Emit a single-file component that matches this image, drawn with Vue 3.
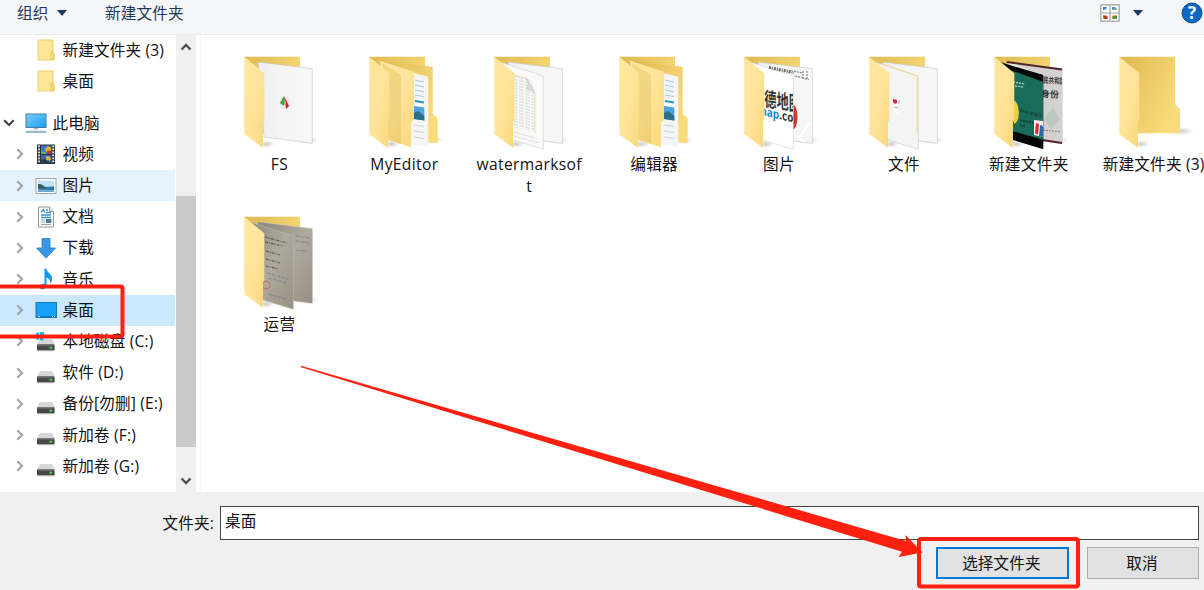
<script setup>
const favourites = ['新建文件夹 (3)', '桌面']

const nodes = [
  { label: '视频', icon: 'video' },
  { label: '图片', icon: 'picture', hover: true },
  { label: '文档', icon: 'document' },
  { label: '下载', icon: 'download' },
  { label: '音乐', icon: 'music' },
  { label: '桌面', icon: 'desktop', selected: true },
  { label: '本地磁盘 (C:)', icon: 'disk', system: true },
  { label: '软件 (D:)', icon: 'disk' },
  { label: '备份[勿删] (E:)', icon: 'disk' },
  { label: '新加卷 (F:)', icon: 'disk' },
  { label: '新加卷 (G:)', icon: 'disk' },
]

const folders = [
  { label: 'FS', kind: 'fs' },
  { label: 'MyEditor', kind: 'nested' },
  { label: 'watermarksoft', kind: 'watermark' },
  { label: '编辑器', kind: 'nested' },
  { label: '图片', kind: 'pictures' },
  { label: '文件', kind: 'files' },
  { label: '新建文件夹', kind: 'cards' },
  { label: '新建文件夹 (3)', kind: 'empty', nowrap: true },
  { label: '运营', kind: 'scans' },
]
</script>

<template>
  <div class="dialog">
    <header class="toolbar">
      <span class="tool organize">组织<i class="caret"></i></span>
      <span class="tool">新建文件夹</span>
      <span class="spacer"></span>
      <svg class="view-icon" viewBox="0 0 20 18">
        <rect x=".8" y=".8" width="18.4" height="16.4" fill="#fff" stroke="#a5a5a5" stroke-width="1.3" />
        <path d="M10 1v16M1 9h18" stroke="#a5a5a5" stroke-width="1.2" />
        <path d="M3 3h4l-2 3H3z" fill="#3d83d2" /><path d="M5 5l2-1v2H4z" fill="#a9c9ea" />
        <path d="M12 3h3l2 2-2 1h-3z" fill="#4c9bcf" /><path d="M14 4h3v1l-2 1z" fill="#8cab55" />
        <path d="M3 11.500h4.500V15H3z" fill="#e0782c" /><path d="M3 11.500h2l2.500 2V15H5z" fill="#b12d20" />
        <path d="M12 11.500h5V15h-5z" fill="#d1a42b" /><path d="M12 13l3-1.500 2 .5v3h-3z" fill="#548c4b" />
      </svg>
      <i class="caret view-caret"></i>
      <svg class="help-icon" viewBox="0 0 22 22">
        <circle cx="11" cy="11" r="10" fill="#0868c6" stroke="#174e84" />
        <text x="11" y="17.2" text-anchor="middle" fill="#fff" font-size="17" font-weight="700">?</text>
      </svg>
    </header>

    <main class="content">
      <aside class="tree">
        <div v-for="name in favourites" :key="name" class="row favourite">
          <svg class="small-folder" viewBox="0 0 18 22">
            <path d="M1 1h15v13l1 1v6H1z" fill="#ffe596" stroke="#efd070" />
            <path d="M14 20.5v-7l2-1.5v2l1 1v5.5z" fill="#f8d775" stroke="#e7c35a" stroke-width=".8" />
          </svg>
          <span>{{ name }}</span>
        </div>
        <div class="row computer">
          <svg class="chevron open" viewBox="0 0 12 12"><path d="M1.2 3.3L6 8l4.8-4.7" /></svg>
          <svg class="pc-icon" viewBox="0 0 22 22">
            <defs>
              <linearGradient id="screen" x2="1" y2="1">
                <stop stop-color="#7acbfa" /><stop offset="1" stop-color="#1ba0f3" />
              </linearGradient>
            </defs>
            <rect x="1" y="2" width="20" height="13.5" fill="url(#screen)" stroke="#477d9e" />
            <path d="M9 16h4v1.5H8z" fill="#a9bac5" />
            <rect x=".6" y="18.8" width="21" height="2.2" rx="1" fill="#9fb6c6" />
          </svg>
          <span>此电脑</span>
        </div>
        <div
          v-for="node in nodes"
          :key="node.label"
          class="row node"
          :class="{ hover: node.hover, selected: node.selected }"
        >
          <svg class="chevron" viewBox="0 0 12 12"><path d="M3.3 1.2L8 6l-4.7 4.8" /></svg>
          <svg class="node-icon" viewBox="0 0 22 22">
            <g v-if="node.icon === 'video'">
              <rect x="2" y="1.5" width="18" height="19.5" fill="#313131" />
              <rect x="6" y="2.5" width="10.5" height="8.5" fill="#3b72d3" />
              <rect x="6" y="12" width="10.5" height="8" fill="#3565ba" />
              <path d="M10 6l3-3 3 2v4h-5z" fill="#e7b626" /><path d="M12 7.500h4V11h-4z" fill="#bd3a33" />
              <path d="M6 8l4 1 2 2H6z" fill="#65b454" /><path d="M11 13l4 .5 1 3.500-5 1z" fill="#d9b23f" />
              <path d="M6 17l4-1 6 4H6z" fill="#273e4b" />
              <path d="M4 2.5v18M18.2 2.5v18" stroke="#f2f2f2" stroke-width="1.8" stroke-dasharray="1.8 1.2" />
            </g>
            <g v-else-if="node.icon === 'picture'">
              <rect x="1" y="3.5" width="20" height="15" fill="#fff" stroke="#a0a4a8" />
              <rect x="3" y="5.5" width="16" height="11" fill="#c2e1f6" />
              <path d="M3 9l4 .5 4 2.500 8-1v5.500H3z" fill="#5c9cba" />
              <path d="M3 9l3 .5 3 2 4 1.500-10 .5z" fill="#2e5e50" />
              <path d="M3 13l16-1v4.500H3z" fill="#2c6fa6" /><path d="M3 14.500l16 .5v1.500H3z" fill="#79b0d0" />
            </g>
            <g v-else-if="node.icon === 'document'">
              <path d="M3.5 1h11l4 4.5V21h-15z" fill="#fff" stroke="#939393" />
              <path d="M14.5 1v4.5h4" fill="#eee" stroke="#939393" />
              <path d="M6 6.5l2.5-3 1 3M11 4h2M11 6.5h5M6 9h10M6 11.5h10" fill="none" stroke="#3a95cf" stroke-width="1.3" />
              <path d="M6 14h4M6 16.2h4M6 18.5h10" stroke="#8fa6b4" />
              <rect x="11" y="13" width="5.5" height="4" fill="#4c7e9c" />
            </g>
            <path v-else-if="node.icon === 'download'" d="M7 1.500h8V11h5.500L11 21.200 1.500 11H7z" fill="#3996e2" stroke="#267dc5" stroke-width=".8" />
            <g v-else-if="node.icon === 'music'">
              <path d="M9.500.5h1.800c.5 4.200 6 5.400 5.700 10.500 0 2-.9 3.300-2.200 4.700.8-3.200-.5-5-3.300-6.200v8c-.1 2.800-2.400 4.100-4.700 3.800-2.900-.5-2.900-4.200.7-5.300.8-.2 1.400-.2 2 0z" fill="#1397ee" />
            </g>
            <g v-else-if="node.icon === 'desktop'">
              <rect x="1" y="3.500" width="20.500" height="15" fill="#18a1fb" stroke="#1677b7" />
              <path d="M2 17.500h19" stroke="#0a76bd" />
              <path d="M3 17.500h2M17 17.500h1M19 17.500h1" stroke="#b9e3fa" />
            </g>
            <g v-else>
              <path d="M5 9h12l3 5.500H2z" fill="#d5d7d9" />
              <rect x="2" y="14.200" width="17.600" height="6.300" rx=".8" fill="#45484a" />
              <path d="M2.500 15h16.500" stroke="#808284" />
              <path d="M3 20.900h15.500" stroke="#b9bbbc" stroke-width=".6" />
              <rect x="14.500" y="16.700" width="2.500" height="2" fill="#36e344" />
              <path v-if="node.system" d="M1 3l3-.5V6H1zM5 2.300L9 2v4H5zM1 7h3v3l-3-.5zM5 7h3.500v3.500L5 10z" fill="#14b4ef" />
            </g>
          </svg>
          <span>{{ node.label }}</span>
        </div>
      </aside>

      <div class="scrollbar">
        <svg class="scroll-arrow" viewBox="0 0 12 12"><path d="M1.500 8.500L6 4l4.500 4.500" /></svg>
        <div class="thumb"></div>
        <svg class="scroll-arrow" viewBox="0 0 12 12"><path d="M1.500 3.500L6 8l4.500-4.500" /></svg>
      </div>

      <section class="files">
        <svg class="defs" aria-hidden="true">
          <defs>
            <linearGradient id="flap" x2="1" y2="1">
              <stop stop-color="#ffe79c" /><stop offset=".5" stop-color="#ffe59b" /><stop offset="1" stop-color="#f9d779" />
            </linearGradient>
            <linearGradient id="back" x2="1" y2=".6">
              <stop stop-color="#dfb951" /><stop offset="1" stop-color="#fadb7b" />
            </linearGradient>
            <linearGradient id="paper" x2="1">
              <stop stop-color="#ededed" /><stop offset=".4" stop-color="#f5f5f5" /><stop offset="1" stop-color="#f7f7f7" />
            </linearGradient>
            <linearGradient id="scan" x2="1" y2="1">
              <stop stop-color="#8c867a" /><stop offset=".5" stop-color="#b0aa9e" /><stop offset="1" stop-color="#978f82" />
            </linearGradient>
            <radialGradient id="shade">
              <stop stop-color="#777" stop-opacity=".4" /><stop offset="1" stop-color="#999" stop-opacity="0" />
            </radialGradient>
            <pattern id="print" width="6" height="3" patternUnits="userSpaceOnUse" patternTransform="skewY(14)">
              <path d="M0 1h5" stroke="#ccd1d3" />
            </pattern>
            <clipPath id="front-sheet"><path d="M11 8L54 22v73.300L24 86z" /></clipPath>
            <clipPath id="rear-sheet"><path d="M19 8l54 7v74.300L50 86V20z" /></clipPath>
          </defs>
        </svg>

        <div v-for="folder in folders" :key="folder.label" class="folder">
          <svg class="folder-icon" viewBox="0 0 80 96">
            <ellipse cx="68" :cy="folder.kind === 'empty' ? 77 : 86" rx="12" ry="4" fill="url(#shade)" />
            <ellipse cx="27" cy="90" rx="9" ry="4" fill="url(#shade)" />
            <path v-if="folder.kind === 'empty'" d="M5.300 2.700H61V50l5 5v24.300H20z" fill="url(#back)" />
            <path v-else d="M5.300 2.700H61V79H20z" fill="url(#back)" />

            <g v-if="folder.kind === 'nested'">
              <path d="M16 6.700l52.700 6V60l5 4.300v25L62 88 40 60z" fill="url(#back)" />
              <path d="M46 18l18.300 4.700v70L46 90z" fill="#f5f5f5" />
              <path d="M51 26l9 2M51 31l9 2M51 36l9 2M51 41l9 1.500" stroke="#9fcde6" />
              <path d="M51 47l9 1.500" stroke="#2d94c9" stroke-width="2" />
              <path d="M50 52l10.300 1.500v13L50 65z" fill="#4aa3df" />
              <path d="M50 59l4-2 6.300 5v4.500L50 65z" fill="#2b6f85" />
              <path d="M50 71l10 1.500M50 77l10 1.500M50 83l10 1.500" stroke="#cfcfcf" />
              <path d="M16 6.700l34 11V66l-3 2.300v25L23.700 86z" fill="url(#flap)" />
              <path d="M18 9l19 12v69l-13-4z" fill="#d9b64c" opacity=".35" />
            </g>
            <path v-else-if="folder.kind !== 'empty'" d="M19 8l54.300 6.700v74.600L25 83z" fill="url(#paper)" stroke="#c5c5c5" stroke-width=".6" />

            <g v-if="folder.kind === 'fs'">
              <rect x="41" y="43" width="10" height="12" rx="2" fill="#e9e9e9" />
              <path d="M45 42l1 4-1 6-4-3z" fill="#36a449" /><path d="M45 42l5 10-3 3-1-8z" fill="#d51e22" />
              <path d="M45 45l2 3-1 3z" fill="#f0a044" />
            </g>
            <g v-if="folder.kind === 'watermark'">
              <path d="M11 8l43.300 14v73.300L24 86z" fill="#fafafa" stroke="#ccc" stroke-width=".6" />
              <path d="M24 20l18 6 4 13v39l-22-5z" fill="url(#print)" />
              <path d="M25 21l12 3 9 15v40" fill="none" stroke="#f7dfa2" />
              <path d="M37 24c4 3 1 9 1 11l8 3z" fill="#dcdddd" stroke="#bbb" stroke-width=".5" />
              <path d="M25 78l21 6M25 82l25 7" stroke="#ddd" />
            </g>
            <g v-if="folder.kind === 'pictures'">
              <g clip-path="url(#rear-sheet)">
                <path d="M55 17l8 2M56 22l7 1.500M63 24l7 1.500M64 17v9M68 17v9" stroke="#868686" stroke-width="1.200" stroke-dasharray="2 1" />
                <ellipse cx="54" cy="63" rx="4.500" ry="12" fill="#d63337" />
                <path d="M71 69L60 84l6 4" fill="none" stroke="#fff" stroke-width="2" />
              </g>
              <path d="M11 8l43.300 14v73.300L24 86z" fill="#fff" stroke="#ccc" stroke-width=".5" />
              <path d="M30 13.500l25 5" stroke="#666" stroke-width="3" stroke-dasharray="2 1 1 1" />
              <g clip-path="url(#front-sheet)" font-weight="700">
                <text transform="translate(13 50) skewY(9) scale(.68 1.100)" font-size="18" fill="#333">高德地图</text>
                <text transform="translate(18 60) skewY(13) scale(.8 1)" font-size="12.500" fill="#1689cf">map<tspan fill="#333">.com</tspan></text>
              </g>
            </g>
            <g v-if="folder.kind === 'files'">
              <path d="M11 8l43.300 14v73.300L24 86z" fill="#f4f4f5" stroke="#c8c8c8" stroke-width=".6" />
              <path d="M17 9.500L53 22v57" fill="none" stroke="#f5d88a" />
              <path d="M31 47l3 2v11l-4-2z" fill="#fff" />
              <path d="M29 45l4 1v3l-2 1-2-2z" fill="#dd2638" /><path d="M35 46v4M30 53l4 1" stroke="#aaa" />
            </g>
            <g v-if="folder.kind === 'cards'">
              <path d="M19 8l54 7v74L50 86V20z" fill="#d5d1d1" />
              <path d="M17.700 8L73 15.500M53 86l20 3" stroke="#532427" stroke-width="2" />
              <g clip-path="url(#rear-sheet)" fill="#373535">
                <text transform="translate(54 29) skewY(3) scale(.7 1)" font-size="8" font-weight="700">民共和国</text>
                <text transform="translate(52 43) skewY(3)" font-size="9" font-weight="700">身份</text>
                <path d="M55 65l9-12 7 13-9 9z" fill="#abc1ad" opacity=".6" />
                <path d="M54 76l18 2" stroke="#807b7b" stroke-dasharray="2 1" />
              </g>
              <path d="M11 8l43.300 13v74.300L24 86z" fill="#050606" />
              <path d="M23 16.700l31 11v58L23 77z" fill="#196c5a" />
              <path d="M24 28l12 2M26 32l9 1" stroke="#abc6ba" stroke-width="1.500" stroke-dasharray="2 1" />
              <path d="M26 55l26 7" stroke="#184f42" stroke-width="3" stroke-dasharray="4 1" />
              <path d="M31 66l14 3M31 71l5 1" stroke="#103f35" stroke-width="2" stroke-dasharray="2 1" />
              <path d="M24 46c7 1 8 22 1 24z" fill="#ead23a" />
              <path d="M45 66l9 1v16l-9-2z" fill="#f5f5f5" /><path d="M47 69l3 1-1 11-3-2z" fill="#d22e31" /><path d="M51 71l3 1v11l-4-1z" fill="#226eb4" />
            </g>
            <g v-if="folder.kind === 'scans'">
              <path d="M19 8l54.300 6.700v74.600L25 83z" fill="url(#scan)" />
              <path d="M11 8l43.300 14v73.300L24 86z" fill="url(#scan)" stroke="#bcb8ae" stroke-width=".7" />
              <path d="M26 23l22 6M26 28l18 4M27 37l14 4M27 45l14 4M27 52l12 3" stroke="#5a585a" stroke-width="1.200" stroke-dasharray="3 1 1 1" />
              <path d="M28 59l21 6M29 64l19 5M29 80l18 5M57 22l14 2M57 27l13 2M57 36l11 1" stroke="#69778c" stroke-width="1.200" stroke-dasharray="4 1" opacity=".6" />
              <circle cx="27" cy="71" r="4" fill="none" stroke="#bf6256" opacity=".8" />
            </g>
            <path class="flap" d="M5.300 2.700l20 16.600V66L24 68.300v25.400L5.300 80.300z" fill="url(#flap)" />
          </svg>
          <span class="folder-name" :class="{ nowrap: folder.nowrap }">{{ folder.label }}</span>
        </div>
      </section>
    </main>

    <footer class="footer">
      <label class="field">
        <span class="field-label">文件夹:</span>
        <span class="input">桌面</span>
      </label>
      <div class="actions">
        <button class="btn btn-primary">选择文件夹</button>
        <button class="btn">取消</button>
      </div>
    </footer>

    <svg class="marks" viewBox="0 0 1204 590">
      <rect x="-10" y="286.500" width="132.500" height="50" rx="2" />
      <rect x="919" y="539" width="159" height="47.500" rx="2" />
      <path d="M301 365.700L906 541l-.5-6 17 17.500-24 4.500 3.500-5.300L301 367.200z" />
    </svg>
  </div>
</template>

<style>
body { background: #f0f0f0; }
</style>

<style scoped>
.dialog {
  position: relative;
  width: 1204px;
  height: 590px;
  display: flex;
  flex-direction: column;
  overflow: hidden;
  color: #111;
  background: #fff;
  font-family: "Open Sans", "Noto Sans CJK SC", sans-serif;
  font-size: 15.6px;
  letter-spacing: .15px;
}
svg { display: block; flex: none; letter-spacing: 0; }
.toolbar {
  box-sizing: border-box;
  height: 35px;
  flex: none;
  display: flex;
  align-items: center;
  padding: 0 1px 8px 17px;
  border-bottom: 1px solid #e9eaec;
  background: #f4f6f8;
  color: #1e395b;
}
.tool { margin-top: -1px; }
.organize { display: flex; align-items: center; width: 88px; }
.caret {
  width: 0;
  height: 0;
  margin-left: 8px;
  border: 5px solid transparent;
  border-top: 6px solid #1e395b;
  border-bottom: 0;
}
.spacer { flex: 1; }
.view-icon { width: 20px; height: 18px; margin-top: -1px; }
.view-caret { margin: 0 38px 0 13px; }
.help-icon { width: 22px; height: 22px; }
.content { display: flex; height: 457px; flex: none; }
.tree { width: 175px; flex: none; overflow: hidden; white-space: nowrap; }
.row { height: 31.2px; display: flex; align-items: center; }
.row span { line-height: 24px; margin-top: -1px; }
.favourite { padding-left: 37px; gap: 7.5px; }
.small-folder { width: 18px; height: 22px; margin-top: -1px; }
.computer { margin-top: 10.2px; padding-left: 3px; }
.pc-icon { width: 22px; height: 22px; margin: 0 5.5px 0 10px; }
.node { padding-left: 14px; }
.node-icon { width: 22px; height: 22px; margin: 0 5.5px 0 9px; }
.chevron { width: 12px; height: 12px; fill: none; stroke: #a6a6a6; stroke-width: 2.2; }
.chevron.open { stroke: #444; }
.hover { background: #e5f3ff; }
.selected { background: #cce8ff; }
.scrollbar {
  width: 20px;
  margin-left: 1px;
  flex: none;
  display: flex;
  flex-direction: column;
  align-items: center;
  background: #f0f0f0;
}
.scroll-arrow { width: 12px; height: 12px; margin: 6px 0 5px; fill: none; stroke: #505050; stroke-width: 2.4; }
.thumb { width: 20px; height: 251px; margin-top: 138px; margin-bottom: 22px; background: #cacaca; }
.files {
  flex: 1;
  min-width: 0;
  display: grid;
  grid-template-columns: repeat(8, 124.9px);
  grid-template-rows: 160px 160px;
  margin-left: 4px;
  padding: 19px 0 0 16px;
  border-left: 1px solid #f6f6f6;
  position: relative;
  overflow: hidden;
}
.defs { position: absolute; width: 0; height: 0; }
.folder { display: flex; flex-direction: column; align-items: center; margin-left: 0; }
.folder-icon { width: 80px; height: 96px; margin-bottom: 3px; }
.folder-name {
  max-width: 108px;
  line-height: 22px;
  letter-spacing: .35px;
  text-align: center;
  word-break: break-all;
}
.nowrap { max-width: none; white-space: nowrap; letter-spacing: .2px; }
.footer {
  flex: 1;
  box-sizing: border-box;
  padding: 14px 5px 0 0;
  background: #f0f0f0;
}
.field { display: flex; align-items: center; height: 34px; }
.field-label { width: 214px; margin: -2px 6px 0 0; text-align: right; }
.input {
  box-sizing: border-box;
  flex: 1;
  height: 34px;
  padding-left: 4px;
  border: 1px solid #444;
  background: #fff;
  line-height: 29px;
}
.actions { display: flex; justify-content: flex-end; gap: 18px; margin-top: 7px; }
.btn {
  box-sizing: border-box;
  width: 112px;
  height: 32px;
  padding: 0 2px 0 0;
  border: 1px solid #adadad;
  background: #e1e1e1;
  color: #111;
  font: inherit;
  letter-spacing: inherit;
  line-height: 28px;
}
.btn-primary { width: 133px; border: 2px solid #0078d7; line-height: 26px; }
.marks { position: absolute; inset: 0; width: 1204px; height: 590px; pointer-events: none; }
.marks rect { fill: none; stroke: #ff2010; stroke-width: 4; }
.marks path { fill: #ff2010; }
</style>
